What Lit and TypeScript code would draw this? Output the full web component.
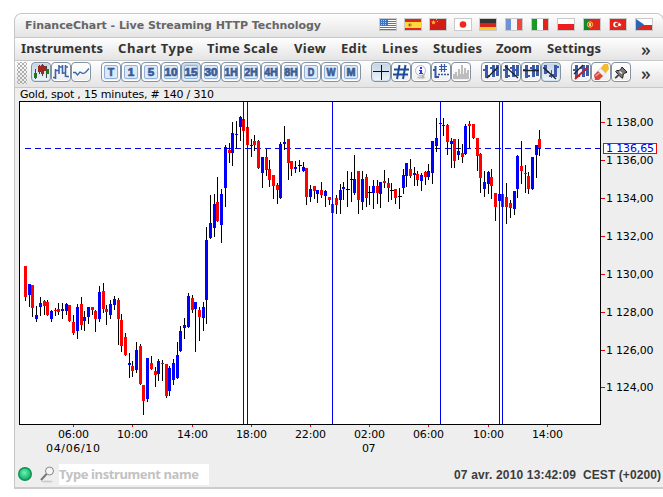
import { LitElement, html, svg, css } from "lit";
import { customElement, property } from "lit/decorators.js";

// x, body top, body bottom, high, low, kind (u = up, d = down, n = unchanged)
const CANDLES = `
24 266 297 266 301 d|28 284 295 284 307 u|31 285 308 285 317 d|35 315 319 306 322 u|39 303 307 297 316 u
43 301 306 300 315 d|46 302 315 300 316 d|50 311 319 310 322 u|54 310 311 308 316 d|57 309 312 303 315 d
61 309 311 303 319 u|65 304 311 303 315 u|68 305 321 305 322 d|72 322 333 315 335 d|76 307 331 304 339 u
80 304 325 297 330 d|83 317 321 311 331 u|87 307 317 307 324 u|91 307 310 307 315 d|94 311 319 310 332 d
98 292 319 286 322 u|102 291 309 283 313 d|105 309 312 305 325 d|109 304 315 300 319 u|113 299 305 296 310 u
117 300 319 298 345 d|120 320 346 314 352 d|124 337 355 333 356 d|128 363 365 353 378 u|131 366 371 361 377 d
135 350 370 342 373 u|139 346 384 344 385 d|142 385 401 385 415 d|146 358 399 358 402 u|150 363 369 356 370 d
154 371 375 367 387 d|157 361 374 359 381 u|161 363 364 360 381 d|165 364 396 364 398 d|168 368 391 366 396 u
172 363 380 359 385 u|176 355 378 342 379 u|179 331 351 326 352 u|183 325 328 318 339 u|187 296 327 293 328 u
191 298 310 295 313 d|194 302 309 302 352 u|198 310 317 307 341 d|202 307 318 302 331 u|205 240 300 227 324 u
209 223 238 195 239 u|213 204 228 194 237 u|216 202 221 177 222 d|220 194 225 189 243 u|224 147 188 145 207 u
228 150 153 143 163 d|231 133 153 122 166 u|235 134 135 121 148 u|239 117 127 116 141 u|242 119 131 119 131 d
246 127 145 127 145 d|250 145 146 139 157 u|253 141 145 135 151 d|257 141 168 140 169 d|261 157 173 157 188 u
265 157 170 149 176 d|268 169 180 160 187 d|272 175 186 175 199 d|276 185 190 183 204 d|279 144 198 142 199 u
283 142 144 126 150 u|287 139 163 139 180 d|290 161 169 161 176 d|294 167 169 161 173 u|298 165 166 160 172 n
302 167 171 162 172 u|305 168 197 168 205 d|309 189 197 185 202 u|313 186 191 186 199 d|316 190 194 190 203 u
320 190 195 182 198 d|324 191 196 190 207 u|328 197 200 197 205 d|331 204 213 204 213 d|335 198 205 195 214 d
339 190 200 184 214 u|342 187 189 182 200 u|346 189 190 171 207 n|350 179 180 172 202 n|353 179 193 155 195 u
357 171 200 171 214 d|361 179 202 171 210 u|365 177 198 174 207 d|368 192 193 186 205 n|372 186 193 180 209 u
376 186 193 180 204 d|379 182 194 182 208 u|383 181 183 170 188 d|387 183 188 178 202 d|390 190 191 183 200 n
394 189 198 189 204 d|398 196 197 188 209 n|402 175 188 169 194 u|405 163 176 163 187 u|409 169 176 159 178 d
413 173 175 167 186 u|416 174 180 171 186 d|420 175 181 173 191 u|424 172 177 171 185 d|427 171 177 164 180 u
431 141 173 141 184 u|435 138 146 118 152 u|439 123 124 123 124 u|442 125 126 118 136 u|446 125 142 124 155 d
450 141 144 138 168 u|453 139 161 139 168 d|457 151 155 139 160 u|461 153 157 144 163 d|464 126 154 124 155 u
468 124 126 121 148 d|472 124 138 124 139 d|476 138 156 138 171 d|479 154 178 153 193 d|483 182 189 171 197 u
487 172 184 171 194 u|490 177 186 169 199 d|494 193 207 193 221 d|498 194 201 194 201 u|501 194 207 194 207 d
505 197 207 183 224 d|509 203 208 200 218 d|513 191 209 191 215 u|516 156 189 155 198 u|520 166 171 141 184 d
524 173 174 165 193 d|527 176 189 172 194 d|531 157 189 157 190 u|535 145 155 145 178 u|538 139 148 130 156 d`
  .trim()
  .split(/[|\n]/)
  .map((row) => {
    const [x, top, bottom, high, low, kind] = row.trim().split(" ");
    return { x: +x, top: +top, bottom: +bottom, high: +high, low: +low, kind };
  });

const PRICES: [number, string][] = [
  [122, "1 138,00"], [160, "1 136,00"], [198, "1 134,00"], [236, "1 132,00"],
  [274, "1 130,00"], [312, "1 128,00"], [350, "1 126,00"], [387, "1 124,00"],
];
const TIMES: [number, string][] = [
  [73, "06:00"], [132, "10:00"], [192, "14:00"], [251, "18:00"], [310, "22:00"],
  [369, "02:00"], [428, "06:00"], [488, "10:00"], [547, "14:00"],
];
const SESSIONS = [243, 247, 332, 440, 499, 502];

@customElement("price-chart")
export class PriceChart extends LitElement {
  static styles = css`
    :host { display: block; height: 372px; }
    svg { display: block; }
    text { font: 11px "DejaVu Sans", sans-serif; fill: #000; }
    .crisp { shape-rendering: crispEdges; }
    .plot { fill: #fff; stroke: #000; }
    .u { fill: #00f; }
    .d { fill: #f00; }
    .n { fill: #000; }
    .wick { fill: #000; }
    .session { fill: #0000f0; }
    .tick { fill: #f00000; }
    .last { stroke: #0000e0; stroke-dasharray: 6 4; }
    .tag { fill: #fff; stroke: #f00; }
    .tagtext { fill: #0000e8; }
  `;
  render() {
    return html`<svg width="648" height="372" viewBox="15 88 648 372">
      <text x="20" y="98" textLength="194">Gold, spot , 15 minutes, # 140 / 310</text>
      <g class="crisp">
        <rect class="plot" x="19.5" y="101.5" width="581" height="323"></rect>
        <line class="last" x1="25" x2="600" y1="148.5" y2="148.5"></line>
        ${CANDLES.map((c) => svg`
          <rect class="wick" x=${c.x + 1} y=${c.high} width="1" height=${c.low - c.high}></rect>
          <rect class=${c.kind} x=${c.x} y=${c.top} width=${c.kind === "n" ? 4 : 3} height=${c.bottom - c.top}></rect>`)}
        ${SESSIONS.map((x) => svg`<rect class="session" x=${x} y="102" width="1" height="322"></rect>`)}
        ${PRICES.map(([y]) => svg`<rect class="tick" x="601" y=${y} width="4" height="1"></rect>`)}
        ${TIMES.map(([x]) => svg`<rect class="tick" x=${x} y="425" width="1" height="2"></rect>`)}
      </g>
      ${PRICES.map(([y, s]) => svg`<text x="606" y=${y + 4} textLength="47.5">${s}</text>`)}
      <rect class="tag crisp" x="603.5" y="143.5" width="53" height="10"></rect>
      <text class="tagtext" x="606" y="152" textLength="48">1 136,65</text>
      ${TIMES.map(([x, s]) => svg`<text x=${x - 15} y="438" textLength="31">${s}</text>`)}
      <text x="46" y="452" textLength="54">04/06/10</text>
      <text x="362" y="452" textLength="13.5">07</text>
    </svg>`;
  }
}

// One line of text set to an exact advance width.
@customElement("fit-label")
export class FitLabel extends LitElement {
  @property() text = "";
  @property({ type: Number }) width = 10;
  static styles = css`
    :host { display: block; flex: none; }
    svg { display: block; overflow: visible; }
    text { fill: currentColor; white-space: pre; }
  `;
  render() {
    return html`<svg width=${this.width} height="16"><text x="0" y="12" textLength=${this.width}>${this.text}</text></svg>`;
  }
}

const r = (x: number, y: number, w: number, h: number, fill: string) =>
  svg`<rect x=${x} y=${y} width=${w} height=${h} fill=${fill}></rect>`;

const FLAGS = {
  us: svg`${r(0, 0, 16, 11, "#fff")}${[0, 2, 4, 6, 8, 10].map((y) => r(0, y, 16, 1, "#e2453c"))}${r(0, 0, 8, 6, "#3b74c4")}${[1, 3, 5].map((y) => [1, 3, 5].map((x) => r(x, y, 1, 1, "#a9c8ee")))}`,
  es: svg`${r(0, 0, 16, 11, "#e1261c")}${r(0, 3, 16, 6, "#ffd83a")}<circle cx="5" cy="6" r="1.8" fill="#c98b3a"></circle>${r(4, 5, 1, 2, "#d43a20")}`,
  cn: svg`${r(0, 0, 16, 11, "#cf1e16")}<path d="M3.5 1l.7 1.6 1.8.1-1.4 1.1.5 1.8-1.6-1-1.6 1 .5-1.8L1 2.700l1.800-.1z" fill="#fdbb28"></path>${r(6, 0, 1, 1, "#fdbb28")}${r(7, 2, 1, 1, "#fdbb28")}`,
  jp: svg`${r(0, 0, 16, 11, "#fff")}<circle cx="8" cy="5.500" r="3.300" fill="#ee2a1c"></circle>`,
  de: svg`${r(0, 0, 16, 4, "#333")}${r(0, 4, 16, 4, "#d8231b")}${r(0, 8, 16, 3, "#ffc928")}`,
  fr: svg`${r(0, 0, 16, 11, "#f4f4f8")}${r(0, 0, 5, 11, "#6d93d6")}${r(11, 0, 5, 11, "#f0453a")}`,
  it: svg`${r(0, 0, 16, 11, "#fff")}${r(0, 0, 5, 11, "#189a28")}${r(11, 0, 5, 11, "#e5231b")}`,
  pl: svg`${r(0, 0, 16, 6, "#fff")}${r(0, 5, 16, 6, "#ee1c1c")}`,
  pt: svg`${r(0, 0, 16, 11, "#e5261c")}${r(0, 0, 6, 11, "#12872c")}<circle cx="6" cy="5.500" r="2.700" fill="#e8391e" stroke="#e8cf3a"></circle>${r(5, 4, 2, 3, "#f3d8c0")}`,
  tr: svg`${r(0, 0, 16, 11, "#e5231b")}<circle cx="6" cy="5.500" r="2.800" fill="#fff"></circle><circle cx="7" cy="5.500" r="2" fill="#e5231b"></circle><path d="M9.500 3.500l.6 1.300 1.500.2-1 1 .2 1.400-1.300-.7-1.300.5.300-1.300-1-1.100 1.400-.1z" fill="#fff"></path>`,
  cz: svg`${r(0, 0, 16, 6, "#fff")}${r(0, 6, 16, 5, "#e0261c")}<path d="M0 0l8 5.500L0 11z" fill="#2b66b4"></path>`,
};

const bars = svg`<g shape-rendering="crispEdges">${r(4, 3, 3, 13, "#3c5aa8")}${r(2, 7, 2, 2, "#3c5aa8")}${r(7, 13, 2, 2, "#3c5aa8")}${r(11, 3, 3, 12, "#3c5aa8")}${r(9, 5, 2, 2, "#3c5aa8")}${r(15, 3, 3, 11, "#3c5aa8")}${r(14, 7, 1, 2, "#3c5aa8")}</g>`;
const barsWide = svg`<g shape-rendering="crispEdges">${r(3, 3, 3, 9, "#3c5aa8")}${r(2, 5, 1, 2, "#3c5aa8")}${r(6, 9, 2, 2, "#3c5aa8")}${r(8, 13, 3, 2, "#3c5aa8")}${r(10, 8, 1, 8, "#3c5aa8")}${r(13, 3, 3, 12, "#3c5aa8")}${r(16, 4, 2, 2, "#3c5aa8")}${r(11, 12, 2, 2, "#3c5aa8")}</g>`;

const ICONS: Record<string, unknown> = {
  candles: svg`<path d="M4.500 7v10M8.500 3v9M11.500 2v12M15.500 4v12" stroke="#444" fill="none"></path>${r(3, 11, 3, 5, "#1c7a1c")}${r(7, 4, 3, 6, "#a32626")}${r(10, 3, 3, 9, "#a32626")}${r(13, 4, 2, 5, "#a32626")}${r(15, 7, 3, 5, "#1c7a1c")}`,
  ohlc: svg`<path d="M4.500 7v10M2 15.500h3M4 8.500h4M8 3v9M8 5h3M11.500 3v9M11 11h3M14.500 3v12M14 5h3M15 14.500h3" stroke="#3d64aa" stroke-width="1.600" fill="none"></path>`,
  line: svg`<path d="M2 10.500h2.500l2 2.500 2.500-3 3 1.500 2.500-1L18 6.500" stroke="#3a66b0" stroke-width="1.300" fill="none"></path>`,
  cross: svg`<path d="M10.500 3v15M2 9.500h16" stroke="#111" fill="none" shape-rendering="crispEdges"></path>`,
  hash: svg`<path d="M8.500 3L6 17M14.500 3L12 17M3 7.500h15M2 12.500h15" stroke="#1d4c9b" stroke-width="2" fill="none"></path>`,
  info: svg`<ellipse cx="10" cy="15.500" rx="4" ry="1" fill="#bbb"></ellipse><path d="M9 12h5l-2 5z" fill="#b4b4b4"></path><circle cx="9.500" cy="8.500" r="5" fill="#f7f9ff" stroke="#bbb"></circle>${r(9, 5, 2, 2, "#2a3ee0")}${r(8, 8, 2, 1, "#2a3ee0")}${r(9, 8, 2, 4, "#2a3ee0")}${r(8, 11, 4, 1, "#2a3ee0")}`,
  grid: svg`<path d="M4.500 4v12M2 8h2M5 15h3" stroke="#3756a4" stroke-width="2" fill="none"></path><path d="M10.500 2v8M13.500 2v8M8 4.500h8M8 7.500h8" stroke="#3756a4" stroke-width="1.200" fill="none"></path><path d="M7 12.500h11" stroke="#3756a4" stroke-width="1.500" stroke-dasharray="2 1" fill="none"></path>`,
  volume: svg`<path d="M2 17v-5h2v-2h2v4h1V7h2v5h1V3h2v9h1V6h2v5h1V8h2v9z" fill="#bdbdbd"></path>`,
  z1: svg`${bars}<path d="M6 16L17 5" stroke="#222" stroke-width="1.300"></path>`,
  z2: svg`${bars}<path d="M4 4l13 12" stroke="#222" stroke-width="1.300"></path>`,
  z3: svg`${bars}<path d="M2 8.500h16" stroke="#222" stroke-width="1.300"></path>`,
  z4: svg`${barsWide}<path d="M3 6l12 11" stroke="#222" stroke-width="1.300"></path>`,
  cut: svg`${bars}<path d="M3 12L12 3" stroke="#222" stroke-width="1.200"></path><path d="M4 17L17 5" stroke="#d01818" stroke-width="1.800"></path>`,
  eraser: svg`<path d="M9 7l4-5h4l1 5-4 5z" fill="#f4bb2e"></path><path d="M6.500 9.500L9.500 6l5 5-3 3.500z" fill="#f3f3f3" stroke="#bbb" stroke-width=".5"></path><path d="M3 13l4-4 5 5-4 4H4z" fill="#d8473c"></path><path d="M4.500 14l4-3" stroke="#f0a39c" stroke-width="1.500"></path>`,
  pin: svg`<path d="M11 5l5 5-1 1-1-.3-2 2.300v2.500l-1 .8-3-3-3 3-.8-.8 3-3-2.500-3 1-1h2.500l2-2z" fill="#777" stroke="#222"></path><path d="M8.500 9.500l2.500 2" stroke="#eee" stroke-width="1.500"></path>`,
};

@customElement("tool-button")
export class ToolButton extends LitElement {
  @property() name = "";
  @property({ type: Boolean, reflect: true }) active = false;
  static styles = css`
    :host {
      display: block; box-sizing: border-box; width: 20px; height: 20px; flex: none;
      border: 1px solid #8292a0; border-radius: 4px;
      background: linear-gradient(#fff, #eee);
      box-shadow: inset 0 0 0 1px #fff;
    }
    :host([active]) { background: linear-gradient(#c4d3e2, #eef5fb); box-shadow: inset 0 0 0 1px #d6e4f0; }
    svg { display: block; margin: -1px; }
    .key { fill: #dde9f7; stroke: #8eb0da; }
    .cap { font: bold 11px "Liberation Sans", sans-serif; fill: #3a5c94; stroke: #3a5c94; stroke-width: .7; text-anchor: middle; }
  `;
  render() {
    const icon = ICONS[this.name];
    return html`<svg width="20" height="20">
      ${icon ?? svg`<rect class="key" x="3.500" y="3.500" width="13" height="13" rx="1.500"></rect>
        <text class="cap" x="10" y="14" textLength=${this.name.length > 1 ? 13 : this.name === "W" || this.name === "M" ? 9 : 6.5} lengthAdjust="spacingAndGlyphs">${this.name}</text>`}
    </svg>`;
  }
}

const MENU: [string, number, number][] = [
  ["Instruments", 82, 21], ["Chart Type", 75, 15], ["Time Scale", 71, 14], ["View", 32, 16], ["Edit", 26, 15],
  ["Lines", 36, 15], ["Studies", 49, 15], ["Zoom", 36, 14], ["Settings", 54, 15],
];
const TOOLS = [
  ["candles", "ohlc", "line"],
  ["T", "1", "5", "10", "15", "30", "1H", "2H", "4H", "8H", "D", "W", "M"],
  ["cross", "hash", "info", "grid", "volume"],
  ["z1", "z2", "z3", "z4"],
  ["cut", "eraser", "pin"],
];
const ACTIVE = new Set(["candles", "15", "cross", "z4"]);

@customElement("app-root")
export class AppRoot extends LitElement {
  static styles = css`
    :host { display: block; box-sizing: border-box; width: 663px; height: 497px; padding: 13px 0 0 14px; overflow: hidden; background: #fff; }
    .window { box-sizing: border-box; width: 650px; height: 476px; border: 1px solid #c6c6c6; border-bottom: 2px solid #ccc; border-radius: 8px 8px 0 0; background: #eee; overflow: hidden; }
    .bar { display: flex; box-sizing: border-box; border-bottom: 1px solid #c8c8c8; background: linear-gradient(#fefefe, #e4e4e4); }
    .title { height: 24px; padding: 3px 10px 0 10px; justify-content: space-between; }
    .title fit-label { color: #666; font: bold 11px "DejaVu Sans", sans-serif; }
    .flags { display: flex; gap: 8px; padding-top: 1px; }
    .flag { display: block; box-sizing: border-box; width: 18px; height: 13px; border: 1px solid #c9c9c9; }
    .flag:nth-child(-n + 4) { margin-right: -1px; }
    .menu { height: 23px; padding: 3px 0 0 0; color: #333; font: bold 13px "Noto Sans", sans-serif; }
    .more { color: #333; font: 500 18px "Noto Sans", sans-serif; line-height: 16px; width: 10px; }
    .menu .more { margin-left: auto; margin-right: 12px; }
    .tools { height: 27px; padding: 1px 12px 0 2px; gap: 10px; }
    .grip { width: 10px; height: 22px; margin-right: -6px; flex: none;
      background-image: radial-gradient(#a8a8a8 .7px, transparent .8px), radial-gradient(#a8a8a8 .7px, transparent .8px);
      background-size: 4px 4px; background-position: 0 0, 2px 2px; }
    .group { display: flex; }
    .tools .more { margin-left: auto; padding-top: 3px; }
    .status { display: flex; align-items: flex-start; padding: 4px 2px 0 3px; }
    .dot { width: 14px; height: 14px; margin-top: 3px; display: block; }
    .lens { display: block; margin: 2px 0 0 7px; }
    .search { display: block; width: 150px; height: 21px; margin-left: 4px; padding-top: 3px; box-sizing: border-box; background: #fff; color: #c2c2c2; font: bold 13px "Noto Sans", sans-serif; }
    .clock { display: flex; gap: 7px; margin-left: auto; padding-top: 3px; color: #3c3c3c; font: bold 12px "Liberation Sans", sans-serif; }
  `;
  render() {
    return html`<div class="window">
      <div class="bar title">
        <fit-label text="FinanceChart - Live Streaming HTTP Technology" width="296"></fit-label>
        <div class="flags">
          ${Object.values(FLAGS).map((f) => html`<svg class="flag" viewBox="0 0 16 11">${f}</svg>`)}
        </div>
      </div>
      <div class="bar menu">
        ${MENU.map(([s, w, gap], i) => html`<svg width=${i ? gap : 6} height="1"></svg><fit-label text=${s} width=${w}></fit-label>`)}
        <span class="more">»</span>
      </div>
      <div class="bar tools">
        <span class="grip"></span>
        ${TOOLS.map((g) => html`<div class="group">${g.map((n) => html`<tool-button name=${n} ?active=${ACTIVE.has(n)}></tool-button>`)}</div>`)}
        <span class="more">»</span>
      </div>
      <price-chart></price-chart>
      <div class="status">
        <svg class="dot" viewBox="0 0 14 14">
          <defs><radialGradient id="g" cx=".45" cy=".4"><stop offset="0" stop-color="#6df0b4"></stop><stop offset=".7" stop-color="#2fc983"></stop><stop offset="1" stop-color="#22b070"></stop></radialGradient></defs>
          <circle cx="7" cy="7" r="6.300" fill="url(#g)" stroke="#0e9152" stroke-width="1.400"></circle>
        </svg>
        <svg class="lens" width="16" height="18">
          <ellipse cx="8" cy="15.500" rx="6" ry="1" fill="#ccc"></ellipse>
          <circle cx="10.500" cy="5" r="4" fill="#f4f4f4" stroke="#888"></circle>
          <path d="M7.500 8L2 14" stroke="#777" stroke-width="2"></path>
        </svg>
        <div class="search"><fit-label text="Type instrument name" width="140"></fit-label></div>
        <div class="clock"><fit-label text="07 avr. 2010 13:42:09" width="122"></fit-label><fit-label text="CEST (+0200)" width="78"></fit-label></div>
      </div>
    </div>`;
  }
}
